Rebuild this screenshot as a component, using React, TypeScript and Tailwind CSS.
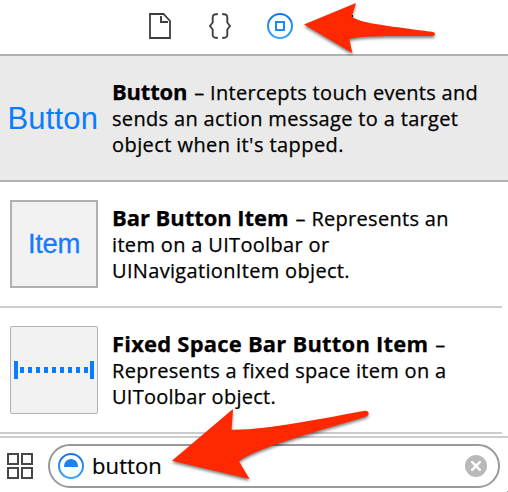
import type { ReactNode } from "react";

function Toolbar() {
  return (
    <header className="flex h-[56px] shrink-0 border-b-2 border-[#b1b1b1] pl-[148px] pt-[12px]">
      <svg className="h-7 w-6" viewBox="0 0 24 28" fill="none" stroke="#3d3d3d">
        <path d="M2 2H15.5L22 9V26H2Z" strokeWidth="1.8" />
        <path d="M13 4V10H20" strokeWidth="1.9" />
      </svg>
      <svg className="ml-9 h-7 w-6" viewBox="0 0 24 28" fill="none" stroke="#404040" strokeWidth="1.9">
        <path d="M9.8 2L6.5 2.5Q4.7 3 4.7 5V10.5L2 14L4.7 17.5V23Q4.7 25 6.5 25.5L9.8 26" />
        <path d="M14.2 2L17.5 2.5Q19.3 3 19.3 5V10.5L22 14L19.3 17.5V23Q19.3 25 17.5 25.5L14.2 26" />
      </svg>
      <svg className="ml-[34px] h-7 w-7" viewBox="0 0 28 28" fill="none" strokeWidth="2">
        <defs>
          <linearGradient id="ring" x1="0" y1="0" x2="0" y2="1">
            <stop offset="0" stopColor="#1673e8" />
            <stop offset="1" stopColor="#37a5fb" />
          </linearGradient>
        </defs>
        <circle cx="14" cy="14" r="12" stroke="url(#ring)" />
        <rect x="10" y="10" width="8" height="8" stroke="#208af0" />
      </svg>
    </header>
  );
}

function Line({ children }: { children: ReactNode }) {
  return <div className="flex h-[26px] items-baseline whitespace-nowrap leading-[26px] [-webkit-text-stroke:0.25px_black]">{children}</div>;
}

function Clear() {
  return (
    <svg className="size-[22px]" viewBox="0 0 22 22">
      <circle cx="11" cy="11" r="11" fill="#b9b9b9" />
      <path d="M7.2 7.2L14.8 14.8M14.8 7.2L7.2 14.8" stroke="white" strokeWidth="2.6" strokeLinecap="round" />
    </svg>
  );
}

function Arrows() {
  return (
    <svg
      className="pointer-events-none absolute left-0 top-0 h-[492px] w-[508px] drop-shadow-[0_2px_1.5px_rgba(0,0,0,0.5)]"
      viewBox="0 0 508 492"
    >
      <rect x="351" y="15" width="2" height="2" fill="#111" />
      <g fill="#ff2800">
        <path d="M304 24.5L356 3L351.7 16.5C358 22.5 382 25.3 433 32Q435.2 32.5 435 34.2Q434.8 36 432.5 36C395 36 360 35.3 349.3 39.3L352.3 53Z" />
        <path d="M172 460.7L233 409L231.5 429.7C265 430.5 325 418 365.3 410.8Q368.4 411 368.7 413.6Q368.6 415.6 366 416.4C320 430.5 255 448 239 461.3L249.5 479Z" />
      </g>
    </svg>
  );
}

export default function App() {
  return (
    <main className="relative flex h-[492px] w-[508px] flex-col overflow-hidden bg-white font-['Open_Sans',sans-serif] text-[20px] text-black">
      <Toolbar />

      <section className="flex h-[126px] shrink-0 border-b-2 border-[#b1b1b1] bg-[#eaeaea]">
        <div className="flex w-[112px] shrink-0 items-center pl-[7.5px] pt-[2px] font-['Liberation_Sans',sans-serif] text-[31px] tracking-[0.15px] text-[#087dff]">
          Button
        </div>
        <div className="pt-[24px]">
          <Line>
            <b className="text-[22px] leading-[20px] tracking-[-0.2px]">Button</b>
            <span className="ml-[7px] tracking-[0.3px]">– Intercepts touch events and</span>
          </Line>
          <Line><span className="tracking-[0.34px]">sends an action message to a target</span></Line>
          <Line><span className="tracking-[0.43px]">object when it's tapped.</span></Line>
        </div>
      </section>

      <section className="flex h-[126px] w-[502px] shrink-0 border-b-2 border-[#cccccc] pl-[10px] pt-[18px]">
        <div className="mr-[14px] flex size-[88px] shrink-0 items-center justify-center border-2 border-[#b1b1b1] bg-[#f2f2f2] font-['Liberation_Sans',sans-serif] text-[27.5px] tracking-[-0.4px] text-[#157bff] [-webkit-text-stroke:0.3px_#157bff]">
          Item
        </div>
        <div className="pt-[6px]">
          <Line>
            <b className="text-[22px] leading-[20px] tracking-[-0.05px]">Bar Button Item</b>
            <span className="ml-[7px] tracking-[0.3px]">– Represents an</span>
          </Line>
          <Line><span className="tracking-[0.33px]">item on a UIToolbar or</span></Line>
          <Line><span className="tracking-[0.33px]">UINavigationItem object.</span></Line>
        </div>
      </section>

      <section className="flex h-[126px] w-[502px] shrink-0 border-b-2 border-[#cccccc] pl-[10px] pt-[18px]">
        <div className="mr-[14px] flex size-[88px] shrink-0 items-center rounded-[2px] border border-[#b1b1b1] bg-[#f2f2f2] pl-[3px]">
          <svg className="h-[18px] w-20" viewBox="0 0 80 18" fill="#087dff">
            <rect width="4" height="18" />
            {[6, 14, 22, 30, 38, 46, 54, 62, 70].map((x) => (
              <rect key={x} x={x} y="6" width="4" height="6" />
            ))}
            <rect x="76" width="4" height="18" />
          </svg>
        </div>
        <div className="pt-[6px]">
          <Line>
            <b className="text-[22px] leading-[20px] tracking-[0.2px]">Fixed Space Bar Button Item</b>
            <span className="ml-[7px]">–</span>
          </Line>
          <Line><span className="tracking-[0.31px]">Represents a fixed space item on a</span></Line>
          <Line><span className="tracking-[0.26px]">UIToolbar object.</span></Line>
        </div>
      </section>

      <footer className="mt-[2px] flex flex-1 border-t-2 border-[#cccccc] pl-[7px] pt-[6px]">
        <svg className="mt-[9px] h-[26px] w-[26px] shrink-0" viewBox="0 0 26 26" fill="none" stroke="#474747" strokeWidth="2">
          <rect x="1" y="1" width="10" height="10" />
          <rect x="15" y="1" width="10" height="10" />
          <rect x="1" y="15" width="10" height="10" />
          <rect x="15" y="15" width="10" height="10" />
        </svg>
        <div className="ml-[15px] flex h-[44px] w-[452px] items-center rounded-full border-2 border-[#999999] pl-[7px] pr-[11px]">
          <svg className="size-7 shrink-0" viewBox="0 0 28 28">
            <circle cx="14" cy="14" r="12" fill="none" stroke="url(#ring)" strokeWidth="2" />
            <path d="M7 15V14A7 7 0 0 1 21 14V15Z" fill="#1f83ec" />
          </svg>
          <span className="ml-[7px] flex-1 pb-[2px] text-[22px] leading-[30px] tracking-[0.1px] [-webkit-text-stroke:0.2px_black]">button</span>
          <Clear />
        </div>
      </footer>
      <Arrows />
      <i className="absolute bottom-0 right-0 size-px bg-[#999999]" />
    </main>
  );
}
